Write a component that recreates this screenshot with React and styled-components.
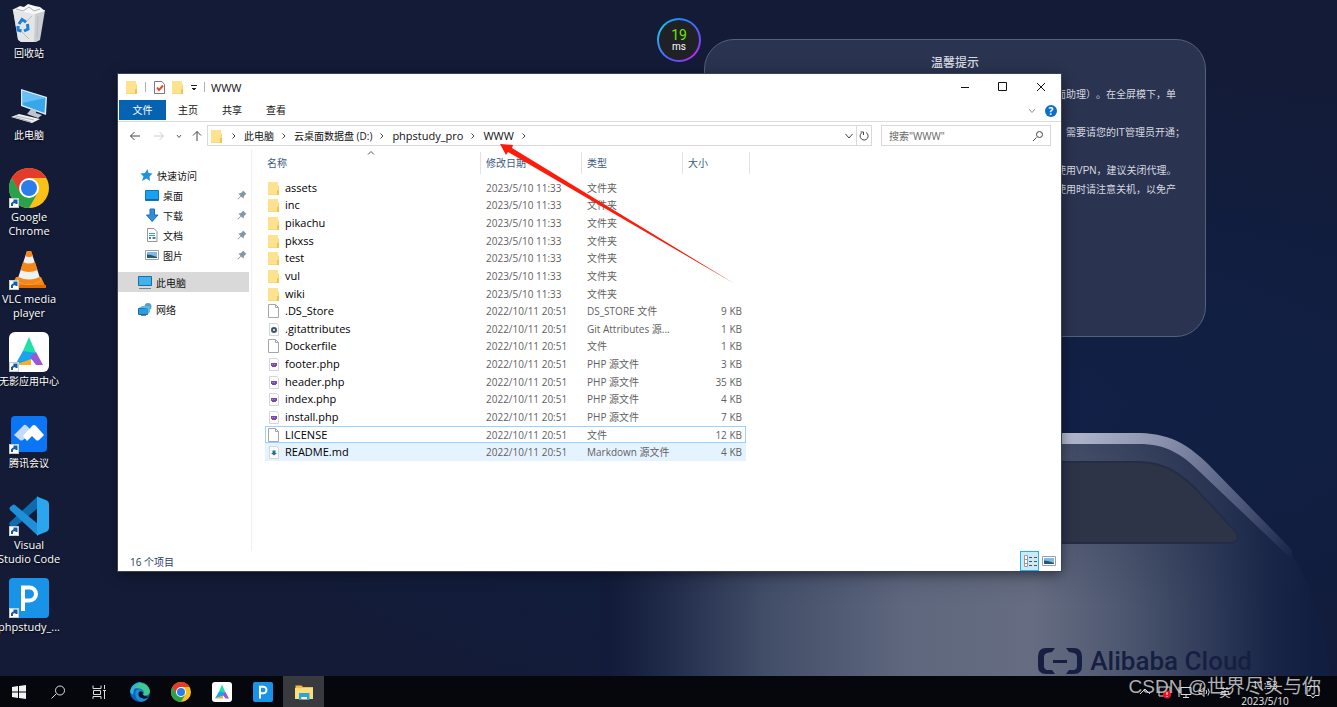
import React from "react"
import styled, { createGlobalStyle } from "styled-components"

const desktopItems = [
    { icon: "bin", lines: ["回收站"], cjk: true },
    { icon: "pc", lines: ["此电脑"], cjk: true },
    { icon: "chrome", lines: ["Google", "Chrome"], shortcut: true },
    { icon: "vlc", lines: ["VLC media", "player"], shortcut: true },
    { icon: "wuying", lines: ["无影应用中心"], cjk: true, shortcut: true },
    { icon: "meeting", lines: ["腾讯会议"], cjk: true, shortcut: true },
    { icon: "vscode", lines: ["Visual", "Studio Code"], shortcut: true },
    { icon: "php", lines: ["phpstudy_..."], shortcut: true },
]

const files = [
    { name: "assets", date: "2023/5/10 11:33", type: "文件夹", icon: "folder" },
    { name: "inc", date: "2023/5/10 11:33", type: "文件夹", icon: "folder" },
    { name: "pikachu", date: "2023/5/10 11:33", type: "文件夹", icon: "folder" },
    { name: "pkxss", date: "2023/5/10 11:33", type: "文件夹", icon: "folder" },
    { name: "test", date: "2023/5/10 11:33", type: "文件夹", icon: "folder" },
    { name: "vul", date: "2023/5/10 11:33", type: "文件夹", icon: "folder" },
    { name: "wiki", date: "2023/5/10 11:33", type: "文件夹", icon: "folder" },
    { name: ".DS_Store", date: "2022/10/11 20:51", type: "DS_STORE 文件", size: "9 KB", icon: "file" },
    { name: ".gitattributes", date: "2022/10/11 20:51", type: "Git Attributes 源...", size: "1 KB", icon: "gear" },
    { name: "Dockerfile", date: "2022/10/11 20:51", type: "文件", size: "1 KB", icon: "file" },
    { name: "footer.php", date: "2022/10/11 20:51", type: "PHP 源文件", size: "3 KB", icon: "phpfile" },
    { name: "header.php", date: "2022/10/11 20:51", type: "PHP 源文件", size: "35 KB", icon: "phpfile" },
    { name: "index.php", date: "2022/10/11 20:51", type: "PHP 源文件", size: "4 KB", icon: "phpfile" },
    { name: "install.php", date: "2022/10/11 20:51", type: "PHP 源文件", size: "7 KB", icon: "phpfile" },
    { name: "LICENSE", date: "2022/10/11 20:51", type: "文件", size: "12 KB", icon: "file", state: "focus" },
    { name: "README.md", date: "2022/10/11 20:51", type: "Markdown 源文件", size: "4 KB", icon: "mdfile", state: "hover" },
]

const quickItems = [
    { icon: "desk", label: "桌面" },
    { icon: "down", label: "下载" },
    { icon: "doc", label: "文档" },
    { icon: "pic", label: "图片" },
]

const crumbs = [
    { label: "此电脑", cjk: true },
    { label: "云桌面数据盘 (D:)", cjk: true },
    { label: "phpstudy_pro" },
    { label: "WWW" },
]

/* ---------- icons ---------- */

const ChromeArt = () => (
    <>
        <circle cx="20" cy="20" r="20" fill="#fbc116" />
        <path d="M2.700 10A20 20 0 0 1 37.300 10H20l-9 15z" fill="#e33b2e" />
        <path d="M2.700 10 11.400 25 20 29l8.600-4L20 40A20 20 0 0 1 2.700 10z" fill="#2aa14c" />
        <circle cx="20" cy="20" r="10" fill="#fff" />
        <circle cx="20" cy="20" r="8" fill="#2b7de9" />
    </>
)

const WuyingArt = () => (
    <>
        <rect width="40" height="40" rx="6" fill="#fff" />
        <path d="M20 5 27 21 13 21z" fill="#1fe0a8" />
        <path d="M14 19 27 21 22 28 6 33z" fill="#1aa3ee" />
        <path d="M27 20 34 33H27L21 25z" fill="#9a55d8" />
        <path d="M6 33 22 27 22 33z" fill="#fab01e" />
    </>
)

const PArt = () => (
    <>
        <rect width="40" height="40" rx="4" fill="#1893e8" />
        <path d="M14 33V9.500H20.500a6.500 6.500 0 0 1 0 13H14" fill="none" stroke="#fff" strokeWidth="4" />
    </>
)

const art = {
    bin: (
        <>
            <path d="M4 6 36 6 31 36 27 38 12 38 9 36z" fill="#c9ccd0" />
            <path d="M4 6 26 9 25 38 12 38 9 35z" fill="#e3e5e7" />
            <path d="M3 6 11 2 15 3 19 0 26 2 31 3 36 7 26 10z" fill="#f6f7f8" />
            <path d="M7 5 14 7 20 3 25 7 31 5" fill="none" stroke="#aab0b6" />
            <path d="M29 12 28 34M23 12 16 19M12 27 20 35" stroke="#b9bdc2" fill="none" />
            <g fill="none" stroke="#1a7fd6" strokeWidth="3">
                <path d="M10 20 13 15.500 17 18" />
                <path d="M18.500 20 19 25 15 27" />
                <path d="M9 22 9 26 12.500 27" />
            </g>
        </>
    ),
    pc: (
        <>
            <path d="M12 3 38 11 37 29 12 20z" fill="#d6eef9" />
            <path d="M13.500 5 36.500 12 35.500 27 13.500 19z" fill="#37a6ea" />
            <path d="M13.500 5 36.500 12 13.500 17z" fill="#66c0f4" />
            <path d="M22 23 27 24 27 27 33 29 29 32 18 28z" fill="#bfc5cb" />
            <path d="M10 28 31 33 23 37 2 31z" fill="#eef0f2" />
            <path d="M7 30 25 34M5 31 22 36" stroke="#a8afb6" />
        </>
    ),
    chrome: <ChromeArt />,
    vlc: (
        <>
            <path d="M7 27H32L37 37.500H2z" fill="#f58a0b" />
            <path d="M2 35H37V38H2z" fill="#e36c00" />
            <path d="M18 1H22L32 31Q20 38 8 31z" fill="#f1f1f1" />
            <path d="M18 1H22L24 6Q20 8 16.300 6z" fill="#f4861a" />
            <path d="M14 12Q20 15 26 12L28.600 20Q20 24 11.500 20z" fill="#f4861a" />
            <path d="M9.500 27Q20 32 30.500 27L32 31Q20 38 8 31z" fill="#f4861a" />
        </>
    ),
    wuying: <WuyingArt />,
    meeting: (
        <>
            <rect x="2" y="2" width="36" height="36" rx="4" fill="#0a75f5" />
            <path d="M5 21 15 11Q16 10 18 12L24 18 14 26Q12 27 11 26z" fill="#c3dcfb" />
            <path d="M14 22 23 12Q25 10 27 12L35 21 30 26Q28 27 27 26L23 22 18 27z" fill="#fff" />
        </>
    ),
    vscode: (
        <>
            <path d="M29 0V12L6 31Q4 32 2.500 31L0.500 29Q0 27 1 26z" fill="#0e6cae" />
            <path d="M6 9 29 28V40L1 14Q0 12.500 1 11L3 9.500Q4.500 8 6 9z" fill="#1e8fd8" />
            <path d="M28 0.500 38 4.500Q40 5.500 40 8V32Q40 34.500 38 35.500L28 39.500z" fill="#2aa5ee" />
        </>
    ),
    php: <PArt />,
    edge: (
        <>
            <circle cx="20" cy="20" r="20" fill="#0d62b5" />
            <path d="M1 16A20 20 0 0 1 40 18C40 26 32 29 26 26C30 20 26 14 18 13C10 12 4 14 1 16z" fill="#3fc98a" />
            <path d="M0 20C2 8 12 1 22 0C10 8 8 14 6 26z" fill="#2bb4e0" />
            <path d="M12 17C20 11 30 18 24 25C28 31 35 30 39 27C35 37 25 42 18 38C11 34 9 24 12 17z" fill="#1b8de0" />
            <path d="M24 25Q20 29 26 33 33 35 39 28 32 31 24 25z" fill="#06070d" />
            <path d="M17 22Q18 17 24 19 28 22 24 26 26 30 33 30 24 34 19 30 16 27 17 22z" fill="#0a1226" />
        </>
    ),
    explorer: (
        <>
            <path d="M3 7H15L18 10H38V33H3z" fill="#efbf45" />
            <path d="M2 12H38V34H2z" fill="#fddc7c" />
            <path d="M10 22H31V36H26V30H15V36H10z" fill="#28a5dd" />
            <path d="M15 30H26V35H15z" fill="#fff2c8" />
        </>
    ),
}

const Art = ({ name, size }) => (
    <svg width={size} height={size} viewBox="0 0 40 40" aria-hidden="true">{art[name]}</svg>
)

const small = {
    folder: (
        <>
            <path d="M1 1H11V4L12 5V14H1z" fill="#f8d974" />
            <path d="M1 1H11V13H1z" fill="#fde38f" />
            <path d="M10 9H12V14H10z" fill="#eec64f" />
        </>
    ),
    file: <path d="M1.500 0.500H8.500L11.500 3.500V13.500H1.500zM8.500 0.500V3.500H11.500" fill="#fff" stroke="#a2a6aa" />,
    gear: (
        <>
            <path d="M2.500 1.500H10L11.500 3.500V13.500H2.500z" fill="#fbfcfc" stroke="#d3d7da" />
            <circle cx="7" cy="8" r="2" fill="none" stroke="#3d5663" strokeWidth="2" />
        </>
    ),
    phpfile: (
        <>
            <path d="M2.500 1.500H10L11.500 3.500V13.500H2.500z" fill="#fbfcfc" stroke="#d3d7da" />
            <path d="M4 6H10V9H9V10H5V9H4z" fill="#7a4aa5" />
            <path d="M5 7.500H9" stroke="#a887c8" strokeDasharray="1 1" />
        </>
    ),
    mdfile: (
        <>
            <path d="M2.500 1.500H10L11.500 3.500V13.500H2.500z" fill="#fbfcfc" stroke="#d3d7da" />
            <path d="M5.500 5.500H8.500V8H10L7 10.500 4 8H5.500z" fill="#1f7391" />
        </>
    ),
    star: <path d="M8.500 1 9.500 5 13.500 5.500 10.500 8.500 11 13 7.500 10.500 3 13 4.500 8.500 1.500 5.500 6 5z" fill="#2191db" />,
    desk: (
        <>
            <path d="M0.500 2.500H13.500V12.500H0.500z" fill="#1ba1f2" stroke="#1175bb" />
            <path d="M1 11.500H13" stroke="#0d66a8" />
        </>
    ),
    down: <path d="M5 1H9.500V7H13L7.200 13.500 1.500 7H5z" fill="#2f8fdf" stroke="#1c6fb8" />,
    doc: (
        <>
            <path d="M2.500 0.500H9L12 3.500V13.500H2.500z" fill="#fff" stroke="#8f979d" />
            <path d="M4 5.500H10M4 7.500H10" stroke="#3696cf" />
            <path d="M4 10H6M7.500 10H10.500" stroke="#4d7f91" strokeWidth="2" />
        </>
    ),
    pic: (
        <>
            <path d="M0.500 2.500H13.500V11.500H0.500z" fill="#fff" stroke="#9aa1a6" />
            <path d="M2 4H12V10H2z" fill="#7db9ee" />
            <path d="M2 6.500 6 7 12 9V10H2z" fill="#28586a" />
        </>
    ),
    thispc: (
        <>
            <path d="M0.500 1.500H13.500V10.500H0.500z" fill="#3fb2ef" stroke="#1d6d9f" />
            <path d="M1 13.500H13" stroke="#6d8796" />
        </>
    ),
    net: (
        <>
            <circle cx="10" cy="4.500" r="3.500" fill="#5a9cc2" />
            <path d="M0.500 6.500H9.500V12.500H0.500z" fill="#2a9de0" stroke="#1a6c9f" />
            <path d="M1 6 4 4H12L9.500 6.500zM9.500 12.500 12 10V4L9.500 6.500z" fill="#5bb8e8" />
            <path d="M3 13.500H8" stroke="#6d8796" />
        </>
    ),
    check: (
        <>
            <path d="M2.500 1.500H10L12.500 4.500V13.500H2.500z" fill="#fff" stroke="#77797c" />
            <path d="M5 7.500 7 10 11 5.500" fill="none" stroke="#e04a25" strokeWidth="2" />
        </>
    ),
    list: (
        <>
            <path d="M1.500 1.500H4.500V12.500H1.500zM1.500 5.500H4.500M1.500 9.500H4.500" fill="#fff" stroke="#9a9a9a" />
            <path d="M6 3.500H9M11 3.500H14M6 7.500H9M11 7.500H14M6 11.500H9M11 11.500H14" stroke="#4c565c" />
        </>
    ),
}

const Small = ({ name }) => (
    <svg width="14" height="14" viewBox="0 0 14 14" aria-hidden="true">{small[name]}</svg>
)

const Line = ({ d, w = 12, h = 12, color = "#444", weight = 1 }) => (
    <svg width={w} height={h} viewBox={`0 0 ${w} ${h}`} fill="none" stroke={color} strokeWidth={weight} aria-hidden="true">
        <path d={d} />
    </svg>
)

const Pin = () => (
    <svg width="10" height="10" viewBox="0 0 10 10" aria-hidden="true">
        <path d="M6 0.500 9.500 4 8.500 4.500 7 6 6.500 8.500 4 6.500 1 9.500 0.500 9 3.500 6 1.500 3.500 4 3 5.500 1.500z" fill="#8496a3" />
    </svg>
)

/* ---------- wallpaper ---------- */

const WallpaperArt = () => (
    <Wallpaper viewBox="0 0 1337 676" preserveAspectRatio="xMaxYMax slice" aria-hidden="true">
        <defs>
            <linearGradient id="body" gradientUnits="userSpaceOnUse" x1="610" y1="0" x2="1315" y2="0">
                <stop offset="0" stopColor="#121b39" />
                <stop offset="0.08" stopColor="#1f2b49" />
                <stop offset="0.22" stopColor="#424d68" />
                <stop offset="0.42" stopColor="#5e677d" />
                <stop offset="0.6" stopColor="#666d82" />
                <stop offset="0.72" stopColor="#4f5971" />
                <stop offset="0.85" stopColor="#2f3b59" />
                <stop offset="0.94" stopColor="#192546" />
                <stop offset="1" stopColor="#121e3f" />
            </linearGradient>
            <linearGradient id="dim" x1="0" y1="0" x2="0" y2="1">
                <stop offset="0" stopColor="#1a2545" stopOpacity="0.4" />
                <stop offset="0.7" stopColor="#1a2545" stopOpacity="0" />
            </linearGradient>
            <linearGradient id="rail" gradientUnits="userSpaceOnUse" x1="1060" y1="440" x2="1292" y2="552">
                <stop offset="0" stopColor="#b4b9cf" />
                <stop offset="0.35" stopColor="#8b92ad" />
                <stop offset="0.75" stopColor="#4b5679" />
                <stop offset="1" stopColor="#1a2649" />
            </linearGradient>
        </defs>
        <path d="M600 444H1140C1172 445 1192 458 1210 476L1290 552C1312 584 1326 630 1330 676H600z" fill="url(#body)" />
        <path d="M600 444H1140C1172 445 1192 458 1210 476L1290 552C1312 584 1326 630 1330 676H600z" fill="url(#dim)" />
        <path d="M900 462H1140C1166 463 1180 474 1194 487L1236 532Q1242 542 1230 543H900z" fill="#2d3447" stroke="#252d46" strokeWidth="2" />
        <path d="M900 433H1140C1174 434 1190 447 1208 464L1292 550V558L1284 552 1200 472C1182 454 1166 444 1138 444H900z" fill="url(#rail)" />
        <g fill="#161f42">
            <path d="M1055 648H1046Q1038 648 1038 657V666Q1038 674 1046 674H1055L1052 670H1047Q1044 669 1044 666V657Q1044 654 1047 653L1052 652z" />
            <path d="M1066 648H1074Q1082 648 1082 657V666Q1082 674 1074 674H1066L1069 670H1074Q1077 669 1077 666V657Q1077 654 1074 653L1069 652z" />
            <path d="M1053 660H1067V663H1053z" />
        </g>
    </Wallpaper>
)

const App = () => {
    return (
        <Screen>
            <Page />
            <Desktop>
                <WallpaperArt />
                <Icons>
                    {desktopItems.map(({ icon, lines, cjk, shortcut }) => (
                        <DeskButton key={icon}>
                            <ArtBox>
                                <Art name={icon} size={40} />
                                {shortcut && (
                                    <Shortcut>
                                        <Line w={8} h={8} d="M2 7V4.500Q3 3 6 3M3.500 1.500H6.500V5" color="#155ca8" weight={2} />
                                    </Shortcut>
                                )}
                            </ArtBox>
                            {lines.map((l) => <DeskLabel $cjk={cjk} key={l}>{l}</DeskLabel>)}
                        </DeskButton>
                    ))}
                </Icons>
                <Brand>Alibaba Cloud</Brand>
                <Notice>
                    <NoticeTitle>温馨提示</NoticeTitle>
                    <NoticeText $gap={19}>面助理）。在全屏模下，单</NoticeText>
                    <NoticeText $gap={19}>，需要请您的IT管理员开通；</NoticeText>
                    <NoticeText>使用VPN，建议关闭代理。</NoticeText>
                    <NoticeText>使用时请注意关机，以免产</NoticeText>
                </Notice>
                <Latency>
                    <LatencyInner>
                        <LatencyValue>19</LatencyValue>
                        <LatencyUnit>ms</LatencyUnit>
                    </LatencyInner>
                </Latency>
                <Explorer />
            </Desktop>
            <Taskbar />
        </Screen>
    )
}
export default App

const Explorer = () => (
    <Window>
        <TitleBar>
            <Small name="folder" />
            <Divider />
            <Small name="check" />
            <Small name="folder" />
            <Line w={8} d="M1 4.500H7M2 7.500H6M3 8.500H5" color="#222" />
            <Divider />
            <Title>WWW</Title>
            <Controls>
                <ControlButton aria-label="最小化"><Line d="M2 6.500H10" color="#111" /></ControlButton>
                <ControlButton aria-label="最大化"><Line d="M1.500 1.500H9.500V9.500H1.500z" color="#111" /></ControlButton>
                <ControlButton aria-label="关闭"><Line d="M2 2 10 10M10 2 2 10" color="#111" /></ControlButton>
            </Controls>
        </TitleBar>
        <Ribbon>
            <FileTab>文件</FileTab>
            <Tab>主页</Tab>
            <Tab>共享</Tab>
            <Tab>查看</Tab>
            <RibbonEnd>
                <Line w={8} d="M1 4 4 7.500 7 4" color="#999" />
                <Help aria-label="帮助">?</Help>
            </RibbonEnd>
        </Ribbon>
        <AddressRow>
            <NavButton $w={24} aria-label="后退"><Line d="M11 6H1.500M5.500 2 1.500 6 5.500 10" /></NavButton>
            <NavButton $w={24} aria-label="前进"><Line d="M1 6H10.500M6.500 2 10.500 6 6.500 10" color="#ccc" /></NavButton>
            <NavButton $w={16} aria-label="最近浏览的位置"><Line w={8} d="M2 5 4 7.500 6 5" color="#555" /></NavButton>
            <NavButton $w={20} aria-label="上移"><Line d="M6 11V1.500M2 5.500 6 1.500 10 5.500" /></NavButton>
            <AddressBox>
                <Small name="folder" />
                <Chevron><Line w={6} d="M1.500 3.500 4 6 1.500 8.500" /></Chevron>
                {crumbs.map(({ label, cjk }) => (
                    <React.Fragment key={label}>
                        <Crumb $cjk={cjk}>{label}</Crumb>
                        <Chevron><Line w={6} d="M1.500 3.500 4 6 1.500 8.500" /></Chevron>
                    </React.Fragment>
                ))}
                <AddressEnd>
                    <NavButton $w={14} aria-label="展开"><Line w={10} d="M1.500 4 5 8 8.500 4" /></NavButton>
                    <Refresh aria-label="刷新"><Line w={10} d="M7 2.500A4 4 0 1 1 2.500 3M1.500 2H4.500V5" /></Refresh>
                </AddressEnd>
            </AddressBox>
            <SearchBox>
                <SearchInput aria-label="搜索" placeholder={'搜索"WWW"'} />
                <Line d="M4.500 7.500 1 11M4.500 4.500A3 3 0 1 1 10.500 4.500A3 3 0 1 1 4.500 4.500" />
            </SearchBox>
        </AddressRow>
        <Body>
            <Side>
                <SideLink href="#" $indent={21}><Small name="star" />快速访问</SideLink>
                {quickItems.map(({ icon, label }) => (
                    <SideLink href="#" $indent={27} key={icon}>
                        <Small name={icon} />{label}
                        <PinBox><Pin /></PinBox>
                    </SideLink>
                ))}
                <SideLink href="#" $indent={20} $top={7} $active><Small name="thispc" />此电脑</SideLink>
                <SideLink href="#" $indent={20} $top={7}><Small name="net" />网络</SideLink>
            </Side>
            <Listing>
                <Table>
                    <colgroup>
                        <Col $w={216} />
                        <Col $w={101} />
                        <Col $w={101} />
                        <Col $w={63} />
                        <Col $w={4} />
                    </colgroup>
                    <thead>
                        <tr>
                            <Th>
                                <SortMark><Line w={8} h={6} d="M1 4.500 4 1.500 7 4.500" color="#555" /></SortMark>
                                <ThText $first>名称</ThText>
                            </Th>
                            <Th><ThText>修改日期</ThText></Th>
                            <Th><ThText>类型</ThText></Th>
                            <Th colSpan={2}><ThText>大小</ThText></Th>
                        </tr>
                    </thead>
                    <tbody>
                        {files.map((f) => (
                            <Row key={f.name} $state={f.state}>
                                <Td><NameCell><Small name={f.icon} />{f.name}</NameCell></Td>
                                <Td>{f.date}</Td>
                                <Td>{f.type}</Td>
                                <Td $right>{f.size}</Td>
                                <td />
                            </Row>
                        ))}
                    </tbody>
                </Table>
            </Listing>
        </Body>
        <Status>
            <span>16 个项目</span>
            <Views>
                <ViewButton $on aria-label="详细信息"><Small name="list" /></ViewButton>
                <ViewButton aria-label="大图标"><Small name="pic" /></ViewButton>
            </Views>
        </Status>
        <Arrow viewBox="0 0 240 150" aria-hidden="true">
            <path d="M4 5 17 6 16 9 239 145 12 13 10 16z" fill="#fb1c0c" />
        </Arrow>
    </Window>
)

const Taskbar = () => (
    <Bar>
        <TaskButton $w={37} aria-label="开始">
            <svg width="14" height="14" viewBox="0 0 14 14"><path d="M0 2 6 1V6.500H0zM7 1 14 0V6.500H7zM0 7.500H6V13L0 12zM7 7.500H14V14L7 13z" fill="#f2f2f2" /></svg>
        </TaskButton>
        <TaskButton aria-label="搜索"><Line w={14} h={14} d="M5.500 8.500 0.500 13.500M4.500 5.500A4.500 4.500 0 1 1 13.500 5.500A4.500 4.500 0 1 1 4.500 5.500" color="#ddd" /></TaskButton>
        <TaskButton aria-label="任务视图"><Line w={14} h={14} d="M1 0.500V3.500H9V0.500M1.500 5.500H8.500V9.500H1.500zM1 14V11.500H9V14M12.500 0V4M12.500 6V14M11 5.500H14" color="#ddd" /></TaskButton>
        <TaskButton aria-label="Edge"><Art name="edge" size={20} /></TaskButton>
        <TaskButton aria-label="Chrome"><Art name="chrome" size={20} /></TaskButton>
        <TaskButton aria-label="无影"><Art name="wuying" size={20} /></TaskButton>
        <TaskButton aria-label="phpstudy"><Art name="php" size={20} /></TaskButton>
        <TaskButton $on aria-label="文件资源管理器"><Art name="explorer" size={20} /></TaskButton>
        <Tray>
            <TrayIcon><Line d="M1 8 6 3 11 8" color="#ddd" /></TrayIcon>
            <TrayIcon>
                <svg width="14" height="14" viewBox="0 0 14 14">
                    <path d="M1 2H12V11H1z" fill="none" stroke="#ddd" />
                    <circle cx="9" cy="9.500" r="4" fill="#e81123" />
                    <path d="M9 7V10M9 11V12" stroke="#fff" />
                </svg>
            </TrayIcon>
            <TrayIcon><Line w={14} d="M3 1.500H13V8.500H3zM5 11.500H11M8 9V11M1 1V11" color="#ddd" /></TrayIcon>
            <TrayIcon><Line w={14} d="M1 4.500H3L6 1.500V10.500L3 7.500H1zM8 4Q9.500 6 8 8M10 2.500Q12.500 6 10 9.500" color="#ddd" /></TrayIcon>
            <TrayIcon>英</TrayIcon>
            <Clock>
                <span>11:53</span>
                <span>2023/5/10</span>
            </Clock>
            <TrayIcon><Line w={14} h={14} d="M1 1.500H13V10.500H9L7 13 5 10.500H1z" color="#ddd" /></TrayIcon>
        </Tray>
        <Watermark>CSDN @世界尽头与你</Watermark>
    </Bar>
)

const Page = createGlobalStyle`
body{
margin:0;
font-family:"Open Sans","Noto Sans CJK SC",sans-serif;
font-size:10px;
overflow:hidden;
}
*{box-sizing:border-box}
button,input{font:inherit;border:0;background:none;padding:0;color:inherit}
svg{display:block;flex:none}
`
const Screen = styled.div`
min-height:100vh;
display:flex;
flex-direction:column;
background:#121b38;
`
const Desktop = styled.main`
flex:1;
position:relative;
overflow:hidden;
background:radial-gradient(ellipse at 75% 60%, #112047 0%, #111e40 30%, #131b37 60%);
`
const Wallpaper = styled.svg`
position:absolute;
inset:0;
width:100%;
height:100%;
`
const Icons = styled.div`
position:relative;
display:flex;
flex-direction:column;
width:58px;
padding-top:4px;
`
const DeskButton = styled.button`
height:82px;
display:flex;
flex-direction:column;
align-items:center;
color:#fff;
`
const ArtBox = styled.span`
position:relative;
margin-bottom:2px;
`
const Shortcut = styled.span`
position:absolute;
left:0;
bottom:0;
width:10px;
height:10px;
background:#fff;
border:1px solid #c4ccd4;
`
const DeskLabel = styled.span`
font-size:${({ $cjk }) => ($cjk ? 10 : 11)}px;
line-height:14px;
white-space:nowrap;
text-shadow:0 1px 2px #000;
`
const Brand = styled.div`
position:absolute;
right:85px;
bottom:0;
font-family:Roboto,sans-serif;
font-size:26px;
line-height:30px;
font-weight:500;
color:#161f42;
`
const Notice = styled.section`
position:absolute;
top:39px;
right:131px;
width:502px;
height:298px;
border:1px solid #566079;
border-radius:30px;
background:#2a334f;
color:#d5d8e0;
`
const NoticeTitle = styled.h2`
margin:13px 0 12px;
font-size:12px;
line-height:20px;
font-weight:500;
text-align:center;
`
const NoticeText = styled.p`
margin:0 0 ${({ $gap }) => $gap || 0}px 351px;
font-family:"Liberation Sans","Noto Sans CJK SC",sans-serif;
line-height:19px;
white-space:nowrap;
text-spacing-trim:space-all;
`
const Latency = styled.div`
position:absolute;
left:657px;
top:18px;
width:44px;
height:44px;
padding:2px;
border-radius:50%;
background:conic-gradient(#1a8cff, #6a4bff 25%, #c02af5 38%, #5a55ff 55%, #17c8ee 85%, #1a8cff);
`
const LatencyInner = styled.div`
height:100%;
border-radius:50%;
background:#202126;
display:flex;
flex-direction:column;
align-items:center;
justify-content:center;
font-family:Roboto,sans-serif;
`
const LatencyValue = styled.span`
font-size:14px;
line-height:14px;
color:#6be800;
`
const LatencyUnit = styled.span`
font-size:10px;
line-height:10px;
color:#fff;
`
const Window = styled.section`
position:absolute;
left:118px;
top:74px;
right:276px;
bottom:105px;
display:flex;
flex-direction:column;
background:#fff;
color:#111;
box-shadow:0 0 0 1px #39435f,0 3px 12px rgba(0,0,0,0.5);
`
const TitleBar = styled.header`
height:26px;
display:flex;
align-items:center;
padding-left:7px;
gap:5px;
`
const Divider = styled.span`
width:1px;
height:10px;
margin:0 1px;
background:#b0b0b0;
`
const Title = styled.span`
font-size:11px;
`
const Controls = styled.div`
margin-left:auto;
display:flex;
height:100%;
padding-right:1px;
`
const ControlButton = styled.button`
width:38px;
display:flex;
align-items:center;
justify-content:center;
`
const Ribbon = styled.div`
height:22px;
display:flex;
align-items:flex-start;
padding-left:1px;
border-bottom:1px solid #dcdcdc;
`
const Tab = styled.button`
width:44px;
height:20px;
line-height:20px;
`
const FileTab = styled(Tab)`
width:47px;
background:#0663b2;
color:#fff;
`
const RibbonEnd = styled.div`
margin-left:auto;
height:22px;
padding-right:4px;
display:flex;
align-items:center;
gap:9px;
`
const Help = styled.button`
width:12px;
height:12px;
border-radius:50%;
background:#0a6fcb;
color:#fff;
font-weight:700;
line-height:12px;
`
const AddressRow = styled.div`
display:flex;
padding:3px 10px 3px 5px;
`
const NavButton = styled.button`
width:${({ $w }) => $w}px;
display:flex;
align-items:center;
justify-content:center;
`
const AddressBox = styled.div`
flex:1;
height:21px;
display:flex;
align-items:center;
padding-left:2px;
border:1px solid #d9d9d9;
`
const Chevron = styled.span`
width:20px;
display:flex;
justify-content:center;
`
const Crumb = styled.button`
font-size:${({ $cjk }) => ($cjk ? 10 : 11)}px;
white-space:nowrap;
`
const AddressEnd = styled.div`
margin-left:auto;
height:100%;
display:flex;
`
const Refresh = styled.button`
width:15px;
display:flex;
align-items:center;
justify-content:center;
border-left:1px solid #d9d9d9;
`
const SearchBox = styled.div`
width:170px;
height:21px;
margin-left:9px;
padding:0 6px 0 7px;
display:flex;
align-items:center;
border:1px solid #d9d9d9;
`
const SearchInput = styled.input`
flex:1;
min-width:0;
outline:0;
&::placeholder{color:#666;opacity:1}
`
const Body = styled.div`
flex:1;
min-height:0;
display:flex;
`
const Side = styled.nav`
width:134px;
padding-top:16px;
border-right:1px solid #f0f0f0;
`
const SideLink = styled.a`
height:20px;
margin:${({ $top }) => $top || 0}px 2px 0 0;
padding-left:${({ $indent }) => $indent}px;
display:flex;
align-items:center;
gap:4px;
color:#111;
text-decoration:none;
background:${({ $active }) => ($active ? "#d9d9d9" : "none")};
`
const PinBox = styled.span`
margin-left:auto;
padding-right:2px;
`
const Listing = styled.div`
flex:1;
padding:3px 0 0 13px;
`
const Table = styled.table`
table-layout:fixed;
width:485px;
height:309px;
border-collapse:separate;
border-spacing:0;
color:#5f5f5f;
`
const Col = styled.col`
width:${({ $w }) => $w}px;
`
const Th = styled.th`
position:relative;
height:27px;
padding:0 0 5px;
text-align:left;
font-weight:400;
color:#3c5a7c;
`
const ThText = styled.span`
display:block;
height:22px;
line-height:22px;
padding-left:${({ $first }) => ($first ? 2 : 5)}px;
border-right:1px solid #e3e3e3;
`
const SortMark = styled.span`
position:absolute;
left:102px;
top:-2px;
`
const Td = styled.td`
padding:0 5px;
white-space:nowrap;
text-align:${({ $right }) => ($right ? "right" : "left")};
line-height:14px;
border:0 solid transparent;
border-width:1px 0;
`
const NameCell = styled.span`
display:flex;
align-items:center;
gap:4px;
margin-left:-3px;
font-size:11px;
color:#000;
`
const edge = ({ $state }) => ($state === "focus" ? "#99d1ff" : "transparent")
const Row = styled.tr`
${Td}{
background:${({ $state }) => ($state === "hover" ? "#e5f3ff" : "none")};
border-color:${edge};
}
${Td}:first-child{
padding-left:4px;
border-left-width:1px;
}
${Td}:nth-child(4){
padding-right:3px;
border-right-width:1px;
}
`
const Status = styled.footer`
height:20px;
display:flex;
align-items:center;
padding-left:12px;
color:#1f3d6b;
`
const Views = styled.div`
margin-left:auto;
display:flex;
padding-right:3px;
`
const ViewButton = styled.button`
width:19px;
height:20px;
display:flex;
align-items:center;
justify-content:center;
border:1px solid ${({ $on }) => ($on ? "#26b0e6" : "transparent")};
background:${({ $on }) => ($on ? "#cbe9f7" : "none")};
`
const Arrow = styled.svg`
position:absolute;
left:378px;
top:65px;
width:240px;
height:150px;
pointer-events:none;
`
const Bar = styled.footer`
position:relative;
height:31px;
display:flex;
background:#06070c;
color:#e6e6e6;
`
const TaskButton = styled.button`
width:${({ $w }) => $w || 41}px;
display:flex;
align-items:center;
justify-content:center;
background:${({ $on }) => ($on ? "#393a3e" : "none")};
`
const Tray = styled.div`
margin-left:auto;
display:flex;
align-items:center;
padding-right:14px;
`
const TrayIcon = styled.span`
width:20px;
display:flex;
justify-content:center;
font-size:11px;
`
const Clock = styled.time`
width:60px;
margin-right:8px;
padding-top:3px;
display:flex;
flex-direction:column;
align-items:center;
line-height:16px;
`
const Watermark = styled.div`
position:absolute;
right:16px;
top:-1px;
font-family:"Liberation Sans","Noto Sans CJK SC",sans-serif;
font-size:19px;
line-height:24px;
color:rgba(205,207,212,0.85);
white-space:nowrap;
`
